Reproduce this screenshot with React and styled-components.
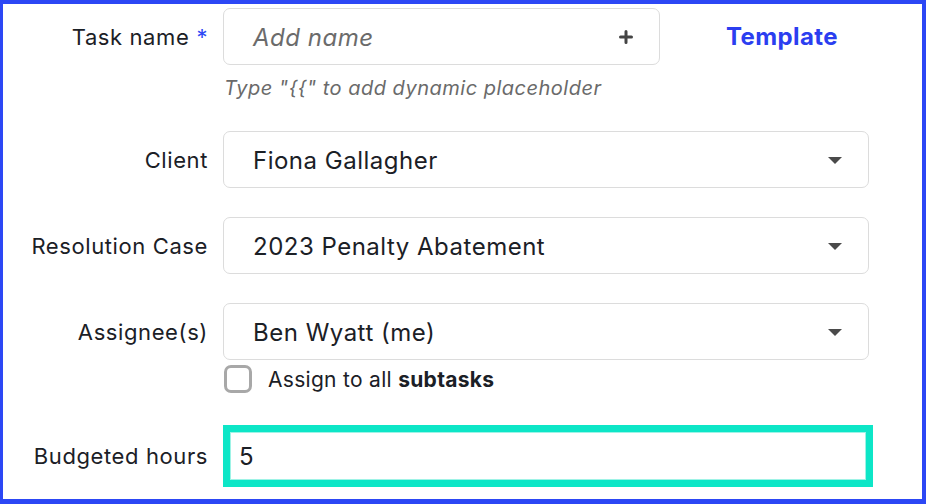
import styled, { createGlobalStyle } from "styled-components";

const Global = createGlobalStyle`
    html, body {
        margin: 0;
        padding: 0;
        background: #ffffff;
    }
    body {
        font-family: 'Inter', 'Noto Sans', sans-serif;
        color: #1b2026;
    }
`

const Frame = styled.div`
    box-sizing: border-box;
    width: 926px;
    height: 504px;
    border: 4px solid #2c47f5;
    border-left-width: 3px;
    border-bottom-width: 5px;
    padding-top: 4px;
    display: flex;
    flex-direction: column;
    gap: 29px;
    background: #fff;
    overflow: hidden;
`

const Row = styled.div`
    display: grid;
    grid-template-columns: 205px 1fr;
    column-gap: 15px;
    align-items: start;
    margin-top: ${({ $top }) => $top || 0}px;
`

const Label = styled.label`
    height: ${({ $h }) => $h || 57}px;
    display: flex;
    align-items: center;
    justify-content: flex-end;
    font-size: 22px;
    letter-spacing: 0.6px;
    color: #1b2026;
    white-space: nowrap;
`

const Required = styled.span`
    color: #2c47f5;
    margin-left: 7px;
`

const Field = styled.div`
    display: flex;
    flex-direction: column;
`

const NameLine = styled.div`
    display: flex;
    align-items: center;
`

const Box = styled.div`
    box-sizing: border-box;
    width: ${({ $w }) => $w}px;
    height: 57px;
    border: 1px solid #dcdcdc;
    border-radius: 7px;
    display: flex;
    align-items: center;
    justify-content: space-between;
    padding: 1px 26px 0 29px;
    font-size: 24px;
    letter-spacing: 0.5px;
    color: #1b2026;
`

const Placeholder = styled.span`
    font-style: italic;
    color: #6b6b6b;
`

const TemplateLink = styled.a`
    margin-left: 66px;
    font-size: 24px;
    letter-spacing: 0.4px;
    font-weight: 700;
    color: #2b3ef0;
    text-decoration: none;
`

const Hint = styled.div`
    margin-top: 9px;
    line-height: 28px;
    font-size: 20px;
    letter-spacing: 0.5px;
    font-style: italic;
    color: #6a6a6a;
    padding-left: 1px;
`

const Caret = styled.span`
    width: 0;
    height: 0;
    border-left: 7px solid transparent;
    border-right: 7px solid transparent;
    border-top: 7px solid #4a4a4a;
`

const CheckLine = styled.div`
    display: flex;
    align-items: center;
    gap: 16px;
    margin-top: 5px;
    font-size: 21px;
    letter-spacing: 0.3px;
    color: #1b2026;
    padding-left: 1px;

    b {
        font-weight: 700;
    }
`

const Checkbox = styled.span`
    box-sizing: border-box;
    width: 28px;
    height: 28px;
    border: 3px solid #a8a8a8;
    border-radius: 7px;
`

const HoursInput = styled.div`
    box-sizing: border-box;
    width: 650px;
    height: 62px;
    border: 7px solid #0de6c7;
    box-shadow: inset 0 0 0 1px #9ef3e6;
    display: flex;
    align-items: center;
    padding-left: 9px;
    font-size: 24px;
    color: #1b2026;
`

function PlusIcon() {
    return (
        <svg width="14" height="14" viewBox="0 0 14 14">
            <path d="M7 1.5v11M1.5 7h11" stroke="#444" strokeWidth="3" strokeLinecap="round" />
        </svg>
    )
}

function Select({ value }) {
    return (
        <Box $w={646}>
            <span>{value}</span>
            <Caret />
        </Box>
    )
}

export default function App() {
    return (
        <>
            <Global />
            <Frame>
                <Row>
                    <Label>Task name<Required>*</Required></Label>
                    <Field>
                        <NameLine>
                            <Box $w={437}>
                                <Placeholder>Add name</Placeholder>
                                <PlusIcon />
                            </Box>
                            <TemplateLink href="#">Template</TemplateLink>
                        </NameLine>
                        <Hint>Type "{"{{"}" to add dynamic placeholder</Hint>
                    </Field>
                </Row>
                <Row>
                    <Label>Client</Label>
                    <Select value="Fiona Gallagher" />
                </Row>
                <Row>
                    <Label>Resolution Case</Label>
                    <Select value="2023 Penalty Abatement" />
                </Row>
                <Row>
                    <Label>Assignee(s)</Label>
                    <Field>
                        <Select value="Ben Wyatt (me)" />
                        <CheckLine>
                            <Checkbox />
                            <span>Assign to all <b>subtasks</b></span>
                        </CheckLine>
                    </Field>
                </Row>
                <Row $top={3}>
                    <Label $h={62}>Budgeted hours</Label>
                    <HoursInput>5</HoursInput>
                </Row>
            </Frame>
        </>
    )
}
